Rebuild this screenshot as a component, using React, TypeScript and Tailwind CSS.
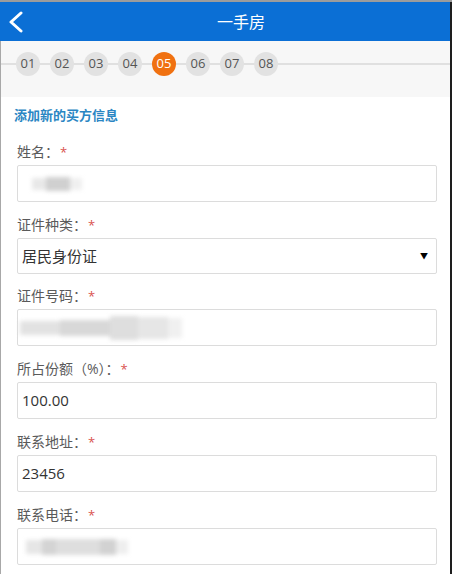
import { ReactNode } from 'react';

const STEPS = ['01', '02', '03', '04', '05', '06', '07', '08'];

function Label({ children }: { children: ReactNode }) {
  return (
    <div className="h-5 mb-[3px] flex items-center text-[14px] leading-5 text-[#5a5a5a]">
      <span>{children}</span>
      <span className="text-[#d9534f] text-[13px] ml-[1px]">*</span>
    </div>
  );
}

function Field({ children }: { children?: ReactNode }) {
  return (
    <div className="h-[37px] shrink-0 mb-[13px] border border-[#dcdcdc] rounded-[2px] bg-white flex items-center px-[4px] text-[15px] text-[#333]">
      {children}
    </div>
  );
}

export default function App() {
  return (
    <div
      className="w-[452px] h-[574px] overflow-hidden bg-white flex flex-col border-t-2 border-[#9c9c9c]"
      style={{ fontFamily: '"Open Sans", "Noto Sans CJK SC", sans-serif' }}
    >
      <div className="flex flex-1 min-h-0">
        <div className="flex-1 flex flex-col min-w-0">
          {/* header */}
          <div className="h-[39px] shrink-0 bg-[#0b6fd5] flex items-center">
            <svg width="18" height="22" viewBox="0 0 18 22" className="ml-[7px]">
              <path d="M14 2 L4 11 L14 20" fill="none" stroke="#fff" strokeWidth="3" strokeLinecap="round" strokeLinejoin="round" />
            </svg>
            <div className="flex-1 text-center text-white text-[16px] translate-x-[16px]">一手房</div>
            <div className="w-[25px]" />
          </div>

          <div className="flex flex-1 min-h-0">
            <div className="w-[1px] bg-[#a8a8a8]" />
            <div className="flex-1 flex flex-col min-w-0">
              {/* steps */}
              <div className="h-[56px] shrink-0 bg-[#f7f7f7] pt-[11px]">
                <div className="relative h-6">
                  <div className="absolute left-0 right-0 top-[11px] h-[2px] bg-[#e0e0e0]" />
                  <div className="relative flex gap-[10px] pl-[15px]">
                    {STEPS.map((s) => (
                      <div
                        key={s}
                        className={
                          s === '05'
                            ? 'w-6 h-6 rounded-full bg-[#f07111] text-white text-[13px] flex items-center justify-center'
                            : 'w-6 h-6 rounded-full bg-[#e2e2e2] text-[#555] text-[13px] flex items-center justify-center'
                        }
                      >
                        {s}
                      </div>
                    ))}
                  </div>
                </div>
              </div>

              {/* form */}
              <div className="flex-1 bg-white pl-[16px] pr-[13px]">
                <div className="pt-[9px] -ml-[3px] text-[13px] leading-[18px] font-bold text-[#2a86c3]">添加新的买方信息</div>
                <div className="h-[18px]" />

                <Label>姓名：</Label>
                <Field>
                  <div className="flex items-center ml-[10px] blur-[2px]">
                    <div className="w-[14px] h-[12px] bg-[#e8e8e8]" />
                    <div className="w-[24px] h-[14px] bg-[#d0d0d0]" />
                    <div className="w-[12px] h-[12px] bg-[#efefef]" />
                  </div>
                </Field>

                <Label>证件种类：</Label>
                <div className="h-[36px] mb-[12px] border border-[#dcdcdc] rounded-[2px] bg-white flex items-center px-[4px] text-[15px] text-[#333]">
                  <span className="flex-1">居民身份证</span>
                  <span className="text-[8px] text-black mr-[4px]">▼</span>
                </div>

                <Label>证件号码：</Label>
                <Field>
                  <div className="flex items-center blur-[2px] -ml-[2px]">
                    <div className="w-[40px] h-[14px] bg-[#e2e2e2]" />
                    <div className="w-[50px] h-[16px] bg-[#d8d8d8]" />
                    <div className="w-[28px] h-[24px] bg-[#dedede]" />
                    <div className="w-[30px] h-[22px] bg-[#e6e6e6]" />
                    <div className="w-[14px] h-[20px] bg-[#f0f0f0]" />
                  </div>
                </Field>

                <Label>所占份额（%）：</Label>
                <Field>100.00</Field>

                <Label>联系地址：</Label>
                <Field>23456</Field>

                <Label>联系电话：</Label>
                <Field>
                  <div className="flex items-center ml-[4px] blur-[2px]">
                    <div className="w-[16px] h-[14px] bg-[#e6e6e6]" />
                    <div className="w-[14px] h-[16px] bg-[#d4d4d4]" />
                    <div className="w-[44px] h-[16px] bg-[#dedede]" />
                    <div className="w-[16px] h-[16px] bg-[#d2d2d2]" />
                    <div className="w-[12px] h-[14px] bg-[#eeeeee]" />
                  </div>
                </Field>
              </div>
            </div>
          </div>
        </div>
        <div className="w-[2px] bg-[#1e1e1e]" />
      </div>
    </div>
  );
}
